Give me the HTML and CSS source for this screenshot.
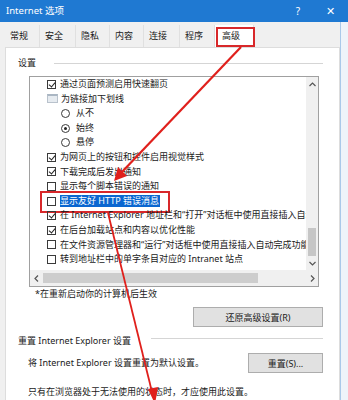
FILE: index.html
```html
<!DOCTYPE html>
<html lang="zh-CN">
<head>
  <meta charset="utf-8" />
  <title>Internet 选项</title>
  <link rel="stylesheet" href="styles.css">
</head>
<body>
  <div class="titlebar">
    <span class="title">Internet 选项</span>
    <span class="help">?</span>
    <span class="close">✕</span>
  </div>
  <div class="frame">
    <div class="dialog">
      <div class="tabs">
        <div class="tab" style="width:35px">常规</div>
        <div class="tab" style="width:36px">安全</div>
        <div class="tab" style="width:34px">隐私</div>
        <div class="tab" style="width:34px">内容</div>
        <div class="tab" style="width:36px">连接</div>
        <div class="tab" style="width:35px">程序</div>
        <div class="tab active" style="width:39px">高级<span class="mark tab-mark"></span></div>
      </div>

      <div class="panel">
        <div class="group-head">
          <span>设置</span>
          <span class="rule"></span>
        </div>

        <div class="listbox">
          <div class="list-top">
            <div class="list-view">
              <div class="item"><span class="box checked"></span>通过页面预测启用快速翻页</div>
              <div class="item"><span class="folder"></span>为链接加下划线</div>
              <div class="item sub"><span class="radio"></span>从不</div>
              <div class="item sub"><span class="radio on"></span>始终</div>
              <div class="item sub"><span class="radio"></span>悬停</div>
              <div class="item"><span class="box checked"></span>为网页上的按钮和控件启用视觉样式</div>
              <div class="item"><span class="box checked"></span>下载完成后发出通知</div>
              <div class="item"><span class="box"></span>显示每个脚本错误的通知</div>
              <div class="item"><span class="box"></span><span class="selected">显示友好 HTTP 错误消息</span><span class="mark item-mark"></span></div>
              <div class="item"><span class="box checked"></span>在 Internet Explorer 地址栏和“打开”对话框中使用直接插入自动完成功能</div>
              <div class="item"><span class="box checked"></span>在后台加载站点和内容以优化性能</div>
              <div class="item"><span class="box"></span>在文件资源管理器和“运行”对话框中使用直接插入自动完成功能</div>
              <div class="item"><span class="box"></span>转到地址栏中的单字条目对应的 Intranet 站点</div>
            </div>
            <div class="vscroll">
              <span class="arrow-btn"><svg width="7" height="5" viewBox="0 0 7 5"><polyline points="0.5,4 3.5,1 6.5,4" fill="none" stroke="#555" stroke-width="1.2"/></svg></span>
              <div class="vtrack"><div class="vthumb"></div></div>
              <span class="arrow-btn"><svg width="7" height="5" viewBox="0 0 7 5"><polyline points="0.5,1 3.5,4 6.5,1" fill="none" stroke="#555" stroke-width="1.2"/></svg></span>
            </div>
          </div>
          <div class="hscroll">
            <span class="arrow-btn"><svg width="5" height="7" viewBox="0 0 5 7"><polyline points="4,0.5 1,3.5 4,6.5" fill="none" stroke="#555" stroke-width="1.2"/></svg></span>
            <div class="htrack"><div class="hthumb"></div></div>
            <span class="arrow-btn"><svg width="5" height="7" viewBox="0 0 5 7"><polyline points="1,0.5 4,3.5 1,6.5" fill="none" stroke="#555" stroke-width="1.2"/></svg></span>
          </div>
        </div>

        <p class="note">*在重新启动你的计算机后生效</p>

        <div class="button-row">
          <button class="btn wide">还原高级设置(R)</button>
        </div>

        <div class="group-head second">
          <span>重置 Internet Explorer 设置</span>
          <span class="rule"></span>
        </div>

        <div class="reset-row">
          <span>将 Internet Explorer 设置重置为默认设置。</span>
          <button class="btn">重置(S)...</button>
        </div>

        <p class="hint">只有在浏览器处于无法使用的状态时，才应使用此设置。</p>
      </div>
    </div>
    <div class="edge"></div>
  </div>

  <!-- red annotation arrows -->
  <svg class="arrows" width="348" height="400" viewBox="0 0 348 400">
    <line x1="241" y1="47" x2="121" y2="173" stroke="#e0201c" stroke-width="2.2"/>
    <polygon points="114,181 118,167 127,176" fill="#e0201c"/>
    <line x1="108" y1="213" x2="152" y2="392" stroke="#e0201c" stroke-width="1.8"/>
    <polygon points="155,404 148,389 158,387" fill="#e0201c"/>
  </svg>
</body>
</html>
```

FILE: styles.css
```css
* {
    padding: 0;
    margin: 0;
    box-sizing: border-box;
}

body {
    width: 348px;
    height: 400px;
    overflow: hidden;
    position: relative;
    background-color: #eef4fa;
    font-family: "Noto Sans", "Noto Sans CJK SC", sans-serif;
    font-size: 9px;
    line-height: 12px;
    color: #1a1a1a;
}

.titlebar {
    height: 22px;
    display: flex;
    align-items: center;
    background-color: #1f79d2;
    color: #ffffff;
    padding-left: 6px;
}

.title {
    font-size: 9.5px;
}

.help {
    margin-left: auto;
    width: 10px;
    text-align: center;
    font-size: 10px;
}

.close {
    margin-left: 22px;
    margin-right: 13px;
    width: 10px;
    text-align: center;
    font-size: 11px;
}

.frame {
    display: flex;
    height: 378px;
}

.dialog {
    width: 341px;
    background-color: #f0f0f0;
    border-right: 1px solid #a9c9ea;
    padding: 3px 0 0 5px;
}

.edge {
    flex: 1;
}

/* tabs */
.tabs {
    display: flex;
    height: 22px;
}

.tab {
    position: relative;
    padding: 5px 0 0 5px;
    border-right: 1px solid #e0e0e0;
    background-color: #f0f0f0;
}

.tab.active {
    background-color: #ffffff;
    padding-left: 7px;
}

.mark {
    position: absolute;
    border: 2px solid #d8282a;
}

.tab-mark {
    left: 1px;
    top: 2px;
    width: 39px;
    height: 20px;
}

/* panel */
.panel {
    width: 335px;
    height: 353px;
    background-color: #ffffff;
    border: 1px solid #dddddd;
    border-bottom: none;
}

.group-head {
    display: flex;
    align-items: center;
    margin-top: 9px;
    padding-left: 12px;
}

.group-head .rule {
    flex: 1;
    height: 1px;
    background-color: #d5d5d5;
    margin: 0 16px 0 18px;
}

.group-head.second {
    margin-top: 8px;
}

.group-head.second .rule {
    margin-left: 20px;
    margin-top: -5px;
}

/* list box */
.listbox {
    width: 290px;
    height: 211px;
    margin: 7px 0 0 23px;
    border: 1px solid #a0a0a0;
    display: flex;
    flex-direction: column;
}

.list-top {
    display: flex;
    height: 193px;
}

.list-view {
    flex: 1;
    overflow: hidden;
    padding-left: 17px;
}

.item {
    position: relative;
    height: 14.6px;
    line-height: 14.6px;
    display: flex;
    align-items: center;
    white-space: nowrap;
}

.item.sub {
    padding-left: 14px;
}

.box {
    width: 9px;
    height: 9px;
    border: 1px solid #3a3a3a;
    margin-right: 4px;
    flex-shrink: 0;
    position: relative;
}

.box.checked::after {
    content: "";
    position: absolute;
    left: 2px;
    top: 0px;
    width: 3px;
    height: 5px;
    border-right: 1.2px solid #222;
    border-bottom: 1.2px solid #222;
    transform: rotate(40deg);
}

.folder {
    width: 11px;
    height: 9px;
    margin-right: 3px;
    background-color: #e6ebf0;
    border: 1px solid #b9c2cc;
    border-top: 2px solid #aab6c3;
    flex-shrink: 0;
}

.radio {
    width: 9px;
    height: 9px;
    border: 1px solid #3a3a3a;
    border-radius: 50%;
    margin-right: 6px;
    flex-shrink: 0;
    position: relative;
}

.radio.on::after {
    content: "";
    position: absolute;
    left: 2px;
    top: 2px;
    width: 3px;
    height: 3px;
    border-radius: 50%;
    background-color: #222;
}

.selected {
    background-color: #0a66d0;
    color: #ffffff;
    line-height: 12px;
    padding-right: 1px;
}

.item-mark {
    left: -7px;
    top: -3px;
    width: 130px;
    height: 22px;
}

.vscroll {
    width: 12px;
    display: flex;
    flex-direction: column;
    background-color: #f0f0f0;
}

.arrow-btn {
    display: flex;
    align-items: center;
    justify-content: center;
    height: 14px;
    flex-shrink: 0;
}

.vtrack {
    flex: 1;
}

.vthumb {
    margin: 137px 2px 0 2px;
    height: 28px;
    background-color: #c6c6c6;
}

.hscroll {
    height: 16px;
    display: flex;
    align-items: center;
    background-color: #f0f0f0;
}

.hscroll .arrow-btn {
    width: 12px;
}

.htrack {
    flex: 1;
}

.hthumb {
    margin-left: 1px;
    width: 215px;
    height: 10px;
    background-color: #cdcdcd;
}

.note {
    margin-top: 1px;
    padding-left: 29px;
}

.button-row {
    display: flex;
    justify-content: flex-end;
    margin: 7px 16px 0 0;
}

.btn {
    height: 20px;
    width: 75px;
    font-family: "Noto Sans", "Noto Sans CJK SC", sans-serif;
    font-size: 9px;
    color: #1a1a1a;
    background-color: #e1e1e1;
    border: 1px solid #adadad;
}

.btn.wide {
    width: 130px;
}

.reset-row {
    display: flex;
    align-items: center;
    justify-content: space-between;
    margin: 6px 16px 0 0;
    padding-left: 22px;
}

.hint {
    margin-top: 13px;
    padding-left: 22px;
}

.arrows {
    position: absolute;
    left: 0;
    top: 0;
    pointer-events: none;
}
```
